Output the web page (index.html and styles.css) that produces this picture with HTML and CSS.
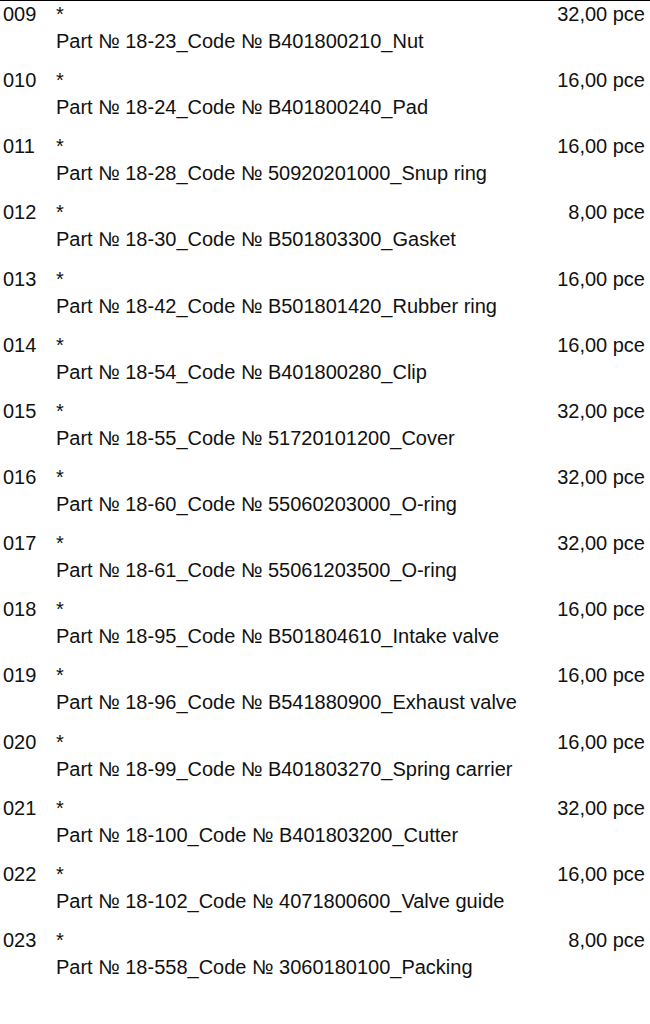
FILE: index.html
```html
<!DOCTYPE html>
<html lang="en">
<head>
  <meta charset="UTF-8" />
  <title>Parts list</title>
  <link rel="stylesheet" href="styles.css">
</head>
<body>
  <!-- Parts list -->
  <div class="parts">
    <div class="part"><span class="pos">009</span><span class="mark">*</span><span class="qty">32,00 pce</span><span class="desc">Part № 18-23_Code № B401800210_Nut</span></div>
    <div class="part"><span class="pos">010</span><span class="mark">*</span><span class="qty">16,00 pce</span><span class="desc">Part № 18-24_Code № B401800240_Pad</span></div>
    <div class="part"><span class="pos">011</span><span class="mark">*</span><span class="qty">16,00 pce</span><span class="desc">Part № 18-28_Code № 50920201000_Snup ring</span></div>
    <div class="part"><span class="pos">012</span><span class="mark">*</span><span class="qty">8,00 pce</span><span class="desc">Part № 18-30_Code № B501803300_Gasket</span></div>
    <div class="part"><span class="pos">013</span><span class="mark">*</span><span class="qty">16,00 pce</span><span class="desc">Part № 18-42_Code № B501801420_Rubber ring</span></div>
    <div class="part"><span class="pos">014</span><span class="mark">*</span><span class="qty">16,00 pce</span><span class="desc">Part № 18-54_Code № B401800280_Clip</span></div>
    <div class="part"><span class="pos">015</span><span class="mark">*</span><span class="qty">32,00 pce</span><span class="desc">Part № 18-55_Code № 51720101200_Cover</span></div>
    <div class="part"><span class="pos">016</span><span class="mark">*</span><span class="qty">32,00 pce</span><span class="desc">Part № 18-60_Code № 55060203000_O-ring</span></div>
    <div class="part"><span class="pos">017</span><span class="mark">*</span><span class="qty">32,00 pce</span><span class="desc">Part № 18-61_Code № 55061203500_O-ring</span></div>
    <div class="part"><span class="pos">018</span><span class="mark">*</span><span class="qty">16,00 pce</span><span class="desc">Part № 18-95_Code № B501804610_Intake valve</span></div>
    <div class="part"><span class="pos">019</span><span class="mark">*</span><span class="qty">16,00 pce</span><span class="desc">Part № 18-96_Code № B541880900_Exhaust valve</span></div>
    <div class="part"><span class="pos">020</span><span class="mark">*</span><span class="qty">16,00 pce</span><span class="desc">Part № 18-99_Code № B401803270_Spring carrier</span></div>
    <div class="part"><span class="pos">021</span><span class="mark">*</span><span class="qty">32,00 pce</span><span class="desc">Part № 18-100_Code № B401803200_Cutter</span></div>
    <div class="part"><span class="pos">022</span><span class="mark">*</span><span class="qty">16,00 pce</span><span class="desc">Part № 18-102_Code № 4071800600_Valve guide</span></div>
    <div class="part"><span class="pos">023</span><span class="mark">*</span><span class="qty">8,00 pce</span><span class="desc">Part № 18-558_Code № 3060180100_Packing</span></div>
  </div>
</body>
</html>
```

FILE: styles.css
```css
body {
  margin: 0;
  padding: 0;
  background: #fff;
  color: #111;
  font-family: "Liberation Sans", Arial, sans-serif;
  font-size: 20px;
}
.parts {
  border-top: 1px solid #000;
  padding: 0 5px 0 3px;
}
.part {
  display: grid;
  grid-template-columns: 53px 1fr auto;
  line-height: 27px;
  margin-bottom: 12.15px;
}
.pos {
  grid-column: 1;
}
.mark {
  grid-column: 2;
}
.qty {
  grid-column: 3;
  text-align: right;
}
.desc {
  grid-column: 2 / 4;
}
```
